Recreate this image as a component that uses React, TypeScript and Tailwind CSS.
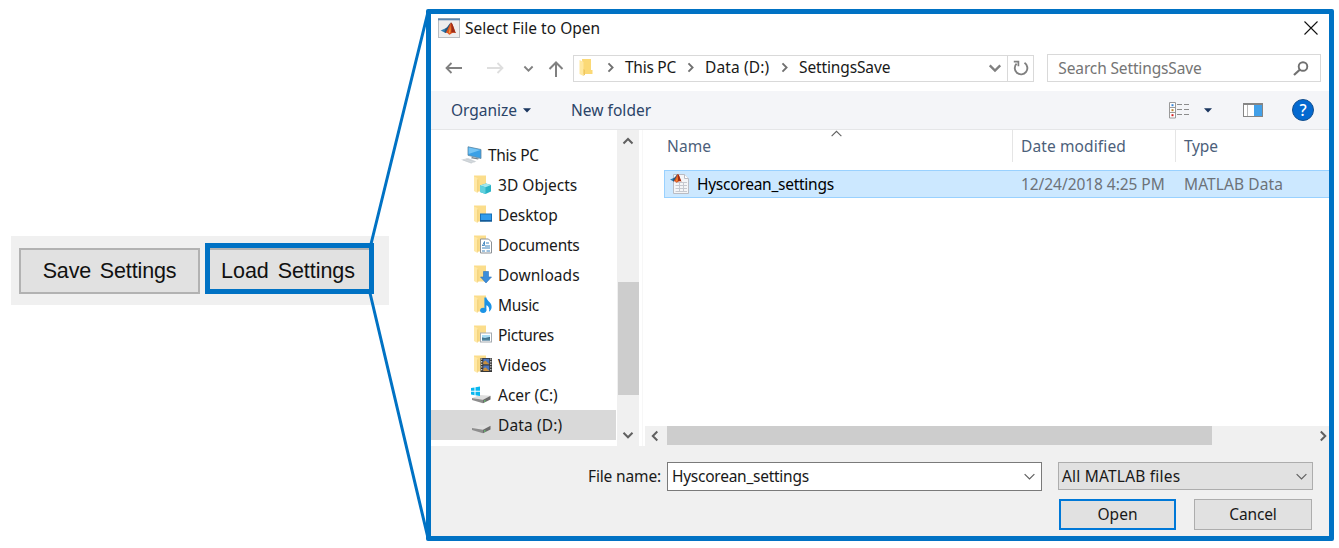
import React from "react";

type IconProps = { className?: string };

const Chevron = ({
  dir,
  size = 12,
  color = "#606060",
  width = 2,
  className = "",
}: {
  dir: "up" | "down" | "left" | "right";
  size?: number;
  color?: string;
  width?: number;
  className?: string;
}) => {
  const paths = {
    up: "M1.5 8.5 L6 4 L10.5 8.5",
    down: "M1.5 3.8 L6 8.3 L10.5 3.8",
    left: "M8.3 1.5 L3.8 6 L8.3 10.5",
    right: "M3.8 1.5 L8.3 6 L3.8 10.5",
  };
  return (
    <svg width={size} height={size} viewBox="0 0 12 12" fill="none" className={`shrink-0 ${className}`}>
      <path d={paths[dir]} stroke={color} strokeWidth={width} />
    </svg>
  );
};

const MatlabPeak = () => (
  <>
    <path d="M0 9 L5 6.5 L8 9 L5 12 Z" fill="#2f7fb5" />
    <path d="M5 6.5 C7.5 5.5 8.5 1 10.5 0 L9.5 7 L5 12 L3.8 10.8 Z" fill="#27567c" />
    <path d="M10.5 0 C8.5 3 8 7 5 11.8 C7 11.2 7.8 13 8.8 14 C10.8 13.3 11.6 10.6 15.5 12 C13.8 8.5 12.5 1 10.5 0 Z" fill="#dc5420" />
    <path d="M10.5 0 C11 4 11.2 8 10.8 11.5 C12.2 10.8 13.6 11 15.5 12 C13.8 8.5 12.5 1 10.5 0 Z" fill="#9c2c18" />
    <path d="M9.6 4 C9.2 7 8.8 9 8.2 11.4 L9.4 12.5 C10.4 10 10.2 7 9.6 4 Z" fill="#f6a03a" />
  </>
);

const MatlabIcon = ({ className = "" }: IconProps) => (
  <svg width="22" height="20" viewBox="0 0 22 20" className={`shrink-0 ${className}`}>
    <rect x="0.5" y="0.5" width="21" height="19" fill="#eeeeee" stroke="#b9bdc1" />
    <rect x="0" y="0.5" width="22" height="1.8" fill="#5d86ae" />
    <g transform="translate(2.7 4.5) scale(0.98 0.88)">
      <MatlabPeak />
    </g>
  </svg>
);

const MatFileIcon = () => (
  <svg width="21" height="22" viewBox="0 0 21 22" className="shrink-0">
    <path d="M3.5 1.5 H14.5 L18.5 5.5 V20.5 H3.5 Z" fill="#f4f5f7" stroke="#b9bcc4" />
    <path d="M14.5 1.5 V5.5 H18.5" fill="#fff" stroke="#b9bcc4" />
    <path d="M5.5 9.5 H17 M5.5 12.5 H17 M5.5 15.5 H17 M5.5 18.5 H17 M9.5 9 V19 M13.5 9 V19" stroke="#c6c9d0" />
    <g transform="translate(0 1) scale(0.74 0.62)">
      <MatlabPeak />
    </g>
  </svg>
);

const FolderShape = () => (
  <>
    <path d="M0 0 H12 V16 H3 L0 15 Z" fill="#fbdd8b" />
    <path d="M0 1 L3.5 2.6 V17.5 L0 15.5 Z" fill="#ffe8a6" />
    <path d="M3.5 4 L4.2 4 V16 L3.5 17.5 Z" fill="#ecc768" />
  </>
);

const AddressFolder = () => (
  <svg width="14" height="18" viewBox="0 0 14 18" className="shrink-0">
    <path d="M3 0 H12 V11 H13.5 V15 H4 Z" fill="#fbd976" />
    <path d="M0.5 1 L4.5 3 V17 L0.5 15 Z" fill="#ffe8a0" />
    <path d="M4.5 10 L6 11 V15.5 L4.5 17 Z" fill="#efc75f" />
  </svg>
);

const badges: Record<string, React.ReactNode> = {
  "3D Objects": (
    <>
      <path d="M6 10 L12 8 L17 9.5 V16 L11.5 18.5 L6 16.5 Z" fill="#29b3c6" />
      <path d="M6 10 L12 8 L17 9.5 L11.5 11.8 Z" fill="#a2e6ee" />
      <path d="M6 10 L11.5 11.8 V18.5 L6 16.5 Z" fill="#5fd0dd" />
    </>
  ),
  Desktop: (
    <>
      <rect x="6.5" y="8.5" width="11" height="7" fill="#2f9cec" stroke="#1670b8" />
      <rect x="6" y="14.5" width="12" height="1.5" fill="#135a99" />
    </>
  ),
  Documents: (
    <>
      <path d="M6.5 3.5 H14.5 L17.5 6.5 V17.5 H6.5 Z" fill="#fff" stroke="#8c9196" />
      <path d="M12 7.5 H15 M11 10.5 H16 M8 12.5 H16 M8 15.5 H11 M12.5 15.5 H16" stroke="#3d83bd" />
      <path d="M8 10 H10.5 M8.5 10 L10.5 6 V10" stroke="#3d83bd" strokeWidth="0.9" fill="none" />
    </>
  ),
  Downloads: <path d="M9.5 6 H14.5 V11.5 H17.5 L12 17.5 L6.5 11.5 H9.5 Z" fill="#3b8ddb" stroke="#2b72b8" strokeWidth="0.6" />,
  Music: (
    <>
      <ellipse cx="9.2" cy="14.8" rx="3.1" ry="2.6" fill="#1b93e6" />
      <path d="M10.4 2 H12.4 C12.7 5.5 18.2 7 17.6 12 C17.3 14 16.3 15.5 15 16.2 C15.8 13 14.6 10.5 12.4 9.8 V15 H10.4 Z" fill="#1b93e6" />
    </>
  ),
  Pictures: (
    <>
      <rect x="6.5" y="7.5" width="11" height="9" fill="#fff" stroke="#a5abb1" />
      <rect x="8" y="9.5" width="8" height="5.5" fill="#a9dcf4" />
      <path d="M8 12 L11 12.5 L16 11.5 V15 H8 Z" fill="#35607c" />
      <path d="M8 13.6 H16" stroke="#5d9ab2" />
    </>
  ),
  Videos: (
    <>
      <rect x="6.5" y="2.5" width="11.5" height="14" fill="#363636" />
      <path d="M7.7 3 V16 M16.8 3 V16" stroke="#dcdcdc" strokeWidth="1.2" strokeDasharray="1.3 1.3" />
      <rect x="9.3" y="3.3" width="6" height="5.4" fill="#4a76bf" />
      <path d="M9.3 8.7 V6.5 L11.5 5 L15.3 8.7 Z" fill="#c98f3c" />
      <rect x="9.3" y="10" width="6" height="5.4" fill="#4a76bf" />
      <path d="M9.3 15.4 V13.2 L11.5 11.7 L15.3 15.4 Z" fill="#c98f3c" />
    </>
  ),
};

const FolderIcon = ({ name }: { name: string }) => (
  <svg width="19" height="20" viewBox="0 0 19 20" className="shrink-0">
    <g transform="translate(0 0.5)">
      <FolderShape />
      {badges[name]}
    </g>
  </svg>
);

const PcIcon = () => (
  <svg width="22" height="18" viewBox="0 0 22 18" className="shrink-0">
    <path d="M7 0.8 L20 3.5 V12.5 L7 9.3 Z" fill="#3aa0e6" stroke="#5f86a0" strokeWidth="0.8" />
    <path d="M7.6 1.6 L19.4 4.1 L7.6 8 Z" fill="#75c4f4" />
    <path d="M11 11 L18 12.5 L17 13.6 L10 12.2 Z" fill="#75828c" />
    <path d="M0 13.8 L7 12 L15.5 15.6 L10 17.5 Z" fill="#d5dade" />
    <path d="M2 13.9 L11 16.9 M5 12.9 L14 15.9" stroke="#c2c8cd" strokeWidth="0.6" />
  </svg>
);

const DriveIcon = ({ windows = false }: { windows?: boolean }) => (
  <svg width="22" height="18" viewBox="0 0 22 18" className="shrink-0">
    <path d="M2 12 L10 9 L20.5 9.8 L13 13.8 Z" fill="#dedede" />
    <path d="M2 12 L13 13.8 V17.3 L2 14 Z" fill="#8e8e8e" />
    <path d="M13 13.8 L20.5 9.8 V13.4 L13 17.3 Z" fill="#6c6c6c" />
    <circle cx="14.8" cy="15" r="0.8" fill="#60e070" />
    {windows && (
      <path d="M1 2 L4.5 1.4 V4.8 H1 Z M5.5 1.2 L10 0.5 V4.8 H5.5 Z M1 5.8 H4.5 V9.2 L1 8.6 Z M5.5 5.8 H10 V10 L5.5 9.3 Z" fill="#08b7ef" />
    )}
  </svg>
);

const Arrow = ({ d, color, w, h, sw = 2 }: { d: string; color: string; w: number; h: number; sw?: number }) => (
  <svg width={w} height={h} viewBox={`0 0 ${w} ${h}`} fill="none" className="shrink-0">
    <path d={d} stroke={color} strokeWidth={sw} />
  </svg>
);

const TitleBar = () => (
  <div className="flex h-[29px] shrink-0 items-center pb-px pl-[7px] pr-[11px]">
    <MatlabIcon />
    <span className="-mt-px ml-[5px] tracking-[0.02px]">Select File to Open</span>
    <svg width="14" height="14" viewBox="0 0 14 14" className="ml-auto">
      <path d="M0.5 0.5 L13.5 13.5 M13.5 0.5 L0.5 13.5" stroke="#111" strokeWidth="1.1" />
    </svg>
  </div>
);

const AddressRow = () => (
  <div className="flex h-[48px] shrink-0 items-center pl-[14px] pr-[8px] pt-[2px]">
    <Arrow w={17} h={12} d="M17 6 H1.5 M6.5 1 L1.5 6 L6.5 11" color="#808080" sw={1.8} />
    <span className="ml-[25px] flex">
      <Arrow w={17} h={12} d="M0 6 H15.5 M10.5 1 L15.5 6 L10.5 11" color="#dedede" sw={1.8} />
    </span>
    <Chevron dir="down" size={11} color="#808080" className="ml-[19px]" />
    <span className="ml-[14px] mt-[2px] flex">
      <Arrow w={16} h={16} d="M8 16 V2 M1.5 8 L8 1.5 L14.5 8" color="#808080" />
    </span>
    <div className="ml-[9px] flex h-[27px] w-[462px] items-center border border-[#d9d9d9] pb-px pl-[5px]">
      <AddressFolder />
      <Chevron dir="right" size={11} color="#707070" className="ml-[12px]" />
      <span className="-mt-px ml-[9px] w-[54px] tracking-[-0.26px]">This PC</span>
      <Chevron dir="right" size={11} color="#707070" className="ml-[6px]" />
      <span className="-mt-px ml-[9px] w-[66px] tracking-[0.14px]">Data (D:)</span>
      <Chevron dir="right" size={11} color="#707070" className="ml-[8px]" />
      <span className="-mt-px ml-[9px] tracking-[-0.13px]">SettingsSave</span>
      <Chevron dir="down" size={14} color="#808080" className="ml-auto mr-[5px]" />
      <div className="-mb-px flex h-[25px] w-[26px] items-center justify-center border-l border-[#d9d9d9]">
        <svg width="16" height="16" viewBox="0 0 16 16" fill="none">
          <path d="M3.6 3.6 A6.3 6.3 0 1 0 11.5 2.8" stroke="#808080" strokeWidth="1.9" />
          <path d="M0.8 1.6 H5.4 V6.2" stroke="#808080" strokeWidth="1.7" />
        </svg>
      </div>
    </div>
    <div className="ml-[13px] flex h-[28px] w-[274px] items-center border border-[#d9d9d9] pl-[10px] pr-[11px] text-[#757575]">
      <span className="tracking-[-0.14px]">Search SettingsSave</span>
      <svg width="16" height="15" viewBox="0 0 16 15" fill="none" className="ml-auto">
        <circle cx="10" cy="5.5" r="4.3" stroke="#707070" strokeWidth="1.9" />
        <path d="M7 8.5 L1 14" stroke="#707070" strokeWidth="2.2" />
      </svg>
    </div>
  </div>
);

const Caret = ({ className = "" }: IconProps) => (
  <svg width="8" height="5" viewBox="0 0 8 5" className={className}>
    <path d="M0 0.3 H8 L4 4.5 Z" fill="#1b365f" />
  </svg>
);

const Toolbar = () => (
  <div className="flex h-[39px] shrink-0 items-center border-b border-[#e5e6e8] bg-[#f4f5f8] pl-[20px] pr-[15px] text-[#2b4468]">
    <span className="w-[66px] tracking-[-0.02px]">Organize</span>
    <Caret className="ml-[6px]" />
    <span className="ml-[40px] tracking-[0.04px]">New folder</span>
    <svg width="21" height="17" viewBox="0 0 21 17" className="ml-auto">
      <path d="M0.5 0.5 H6.5 V16 H0.5 Z M0.5 5.5 H6.5 M0.5 10.5 H6.5" fill="#fff" stroke="#9a9a9a" />
      <rect x="2.5" y="2.2" width="2" height="2" fill="#3886d8" />
      <rect x="2.5" y="7.2" width="2" height="2" fill="#b98330" />
      <rect x="2.5" y="12.2" width="2" height="2" fill="#d32020" />
      <path d="M8 2.5 H13 M15 2.5 H20 M8 7.5 H13 M15 7.5 H20 M8 12.5 H13 M15 12.5 H20" stroke="#8c8c8c" />
    </svg>
    <Caret className="ml-[14px]" />
    <svg width="20" height="14" viewBox="0 0 20 14" className="ml-[31px]">
      <rect x="0.5" y="0.5" width="19" height="13" fill="#fff" stroke="#858585" />
      <rect x="0" y="0" width="20" height="2" fill="#858585" />
      <path d="M4.5 2 V13" stroke="#b8b8b8" />
      <rect x="11" y="2" width="8" height="11" fill="#42a0e8" />
    </svg>
    <span className="ml-[29px] flex h-[22px] w-[22px] items-center justify-center rounded-full border border-[#14508f] bg-[#0469d0] text-[16px] font-medium leading-none text-white">
      ?
    </span>
  </div>
);

const places = [
  { name: "3D Objects", track: "tracking-[0.02px]" },
  { name: "Desktop", track: "tracking-[-0.1px]" },
  { name: "Documents", track: "tracking-[-0.22px]" },
  { name: "Downloads", track: "tracking-[0.05px]" },
  { name: "Music", track: "tracking-[-0.3px]" },
  { name: "Pictures", track: "tracking-[-0.3px]" },
  { name: "Videos", track: "tracking-[0.03px]" },
];

const Sidebar = () => (
  <div className="flex w-[208px] shrink-0">
    <div className="w-[186px] pt-[10px]">
      <div className="flex h-[30px] items-center pl-[30px]">
        <PcIcon />
        <span className="ml-[5px] tracking-[-0.3px]">This PC</span>
      </div>
      {places.map((p) => (
        <div key={p.name} className="flex h-[30px] items-center pl-[43px]">
          <FolderIcon name={p.name} />
          <span className={`ml-[5px] ${p.track}`}>{p.name}</span>
        </div>
      ))}
      <div className="flex h-[30px] items-center pl-[39px]">
        <DriveIcon windows />
        <span className="ml-[6px] tracking-[0px]">Acer (C:)</span>
      </div>
      <div className="mr-px flex h-[30px] items-center bg-[#d9d9d9] pl-[39px]">
        <DriveIcon />
        <span className="ml-[6px] tracking-[0.14px]">Data (D:)</span>
      </div>
    </div>
    <div className="flex w-[22px] flex-col items-center bg-[#f0f0f0]">
      <Chevron dir="up" className="mt-[5px]" />
      <div className="mt-[135px] h-[113px] w-[21px] bg-[#cdcdcd]" />
      <Chevron dir="down" className="mb-[5px] mt-auto" />
    </div>
  </div>
);

const FileList = () => (
  <div className="ml-[3px] flex min-w-0 flex-1 flex-col border-l border-[#f7f7f7]">
    <div className="flex h-[32px] text-[#4c607a]">
      <div className="relative flex w-[370px] items-center border-r border-[#e5e5e5] pl-[24px]">
        <span className="tracking-[0.1px]">Name</span>
        <Chevron dir="up" size={13} width={1} className="absolute left-[187px] top-[-3px]" />
      </div>
      <div className="flex w-[163px] items-center border-r border-[#e5e5e5] pl-[8px]">
        <span className="tracking-[0.12px]">Date modified</span>
      </div>
      <div className="flex items-center pl-[8px]">
        <span className="tracking-[-0.2px]">Type</span>
      </div>
    </div>
    <div className="ml-[21px] mt-[8px] flex h-[28px] items-center border border-r-0 border-[#99d1ff] bg-[#cce8ff] text-[#6d7278]">
      <div className="flex w-[356px] items-center pl-[5px]">
        <MatFileIcon />
        <span className="ml-[6px] tracking-[-0.26px] text-black">Hyscorean_settings</span>
      </div>
      <span className="w-[163px] tracking-[-0.06px]">12/24/2018 4:25 PM</span>
      <span className="tracking-[0.1px]">MATLAB Data</span>
    </div>
    <div className="ml-[2px] mt-auto flex h-[20px] items-center bg-[#f0f0f0]">
      <Chevron dir="left" className="ml-[4px]" />
      <div className="mb-px ml-[6px] h-[19px] w-[545px] bg-[#cdcdcd]" />
      <Chevron dir="right" className="ml-auto" />
    </div>
  </div>
);

const Footer = () => (
  <div className="flex flex-1 flex-col bg-[#f0f0f0] pt-[16px]">
    <div className="flex h-[29px] items-start">
      <span className="w-[236px] pr-[6px] text-right leading-[29px] tracking-[-0.15px]">File name:</span>
      <div className="flex h-[29px] w-[375px] items-center border border-[#7a7a7a] bg-white pl-[4px] pr-[5px]">
        <span className="-mt-[2px] tracking-[-0.26px]">Hyscorean_settings</span>
        <Chevron dir="down" size={13} width={1.1} className="ml-auto" />
      </div>
      <div className="ml-[16px] flex h-[28px] w-[255px] items-center border border-[#adadad] bg-[#e1e1e1] pl-[3px] pr-[4px]">
        <span className="tracking-[0.2px]">All MATLAB files</span>
        <Chevron dir="down" size={13} width={1.1} className="ml-auto" />
      </div>
    </div>
    <div className="mt-[8px] flex pl-[628px]">
      <button className="h-[31px] w-[117px] border-2 border-[#0078d7] bg-[#e1e1e1] pb-[2px]">Open</button>
      <button className="ml-[18px] h-[31px] w-[118px] border border-[#adadad] bg-[#e1e1e1] pb-[2px] tracking-[-0.15px]">Cancel</button>
    </div>
  </div>
);

export default function App() {
  return (
    <div className="relative flex h-[548px] w-[1339px] overflow-hidden bg-white">
      <div className="ml-[11px] mt-[236px] flex h-[69px] w-[378px] shrink-0 bg-[#f0f0f0] pl-[8px] pt-[7px] font-['Liberation_Sans',sans-serif] text-[21.5px] text-[#111]">
        <button className="mt-[5px] h-[46px] w-[181px] border-2 border-[#b2b2b2] bg-[#e1e1e1] pt-px tracking-[-0.15px] [word-spacing:3px]">
          Save Settings
        </button>
        <div className="ml-[5px] h-[51px] w-[169px] border-[5px] border-[#0072c4]">
          <button className="h-[41px] w-full border-t-2 border-[#b2b2b2] bg-[#e1e1e1] pr-[3px] pt-[3px] tracking-[-0.05px] [word-spacing:3px]">
            Load Settings
          </button>
        </div>
      </div>

      <div className="ml-[37px] mt-[9px] flex h-[532px] w-[908px] shrink-0 flex-col whitespace-nowrap rounded-[2px] border-[5px] border-[#0072c4] bg-white font-['Noto_Sans',sans-serif] text-[15.5px] leading-[20px] text-[#191919]">
        <TitleBar />
        <AddressRow />
        <Toolbar />
        <div className="flex h-[316px] shrink-0">
          <Sidebar />
          <FileList />
        </div>
        <Footer />
      </div>

      <svg width="1339" height="548" viewBox="0 0 1339 548" className="pointer-events-none absolute left-0 top-0" fill="none">
        <path d="M371 244 L428 12 M370 293 L428 538" stroke="#0072c4" strokeWidth="3" />
      </svg>
    </div>
  );
}
